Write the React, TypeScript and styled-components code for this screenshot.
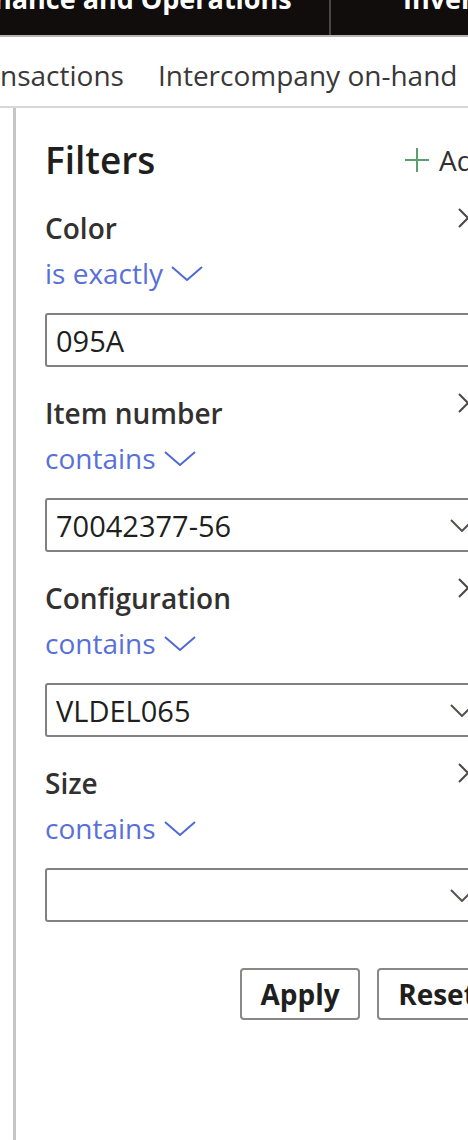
import React from "react";
import styled, { createGlobalStyle } from "styled-components";

const Global = createGlobalStyle`
  html, body {
    margin: 0;
    padding: 0;
    background: #ffffff;
  }
  body {
    width: 468px;
    height: 1140px;
    overflow: hidden;
    font-family: "Open Sans", "Noto Sans", sans-serif;
    color: #323130;
  }
`;

const Page = styled.div`
  width: 468px;
  height: 1140px;
  overflow: hidden;
  display: flex;
  flex-direction: column;
`;

const TopBar = styled.header`
  height: 35px;
  flex-shrink: 0;
  background: #110d0c;
  border-bottom: 2px solid #b4b4b4;
  display: flex;
  align-items: flex-end;
  overflow: hidden;
  white-space: nowrap;
`;

const Brand = styled.div`
  width: 335px;
  flex-shrink: 0;
  margin-left: -6px;
  margin-bottom: 23px;
  color: #ffffff;
  font-weight: 700;
  font-size: 27px;
  line-height: 27px;
`;

const BarDivider = styled.div`
  width: 2px;
  align-self: stretch;
  flex-shrink: 0;
  background: #4a4846;
`;

const ModuleName = styled.div`
  margin-left: 72px;
  margin-bottom: 23px;
  color: #ffffff;
  font-weight: 700;
  font-size: 27px;
  line-height: 27px;
`;

const SubNav = styled.nav`
  height: 69px;
  flex-shrink: 0;
  border-bottom: 2px solid #d6d6d6;
  display: flex;
  align-items: center;
  gap: 34px;
  white-space: nowrap;
  overflow: hidden;
`;

const NavTab = styled.span`
  font-size: 28px;
  line-height: 36px;
  color: #3a3838;
  padding-top: 6px;
`;

const Body = styled.div`
  flex: 1;
  display: flex;
  min-height: 0;
`;

const LeftRail = styled.div`
  width: 13px;
  flex-shrink: 0;
  border-right: 3px solid #c8c6c4;
`;

const Panel = styled.aside`
  flex-shrink: 0;
  width: 452px;
  padding-left: 29px;
  padding-top: 28px;
  display: flex;
  flex-direction: column;
`;

const Header = styled.div`
  display: flex;
  align-items: center;
  justify-content: space-between;
  height: 48px;
`;

const Title = styled.h2`
  margin: 0;
  font-size: 37px;
  line-height: 48px;
  font-weight: 600;
  color: #201f1e;
`;

const AddButton = styled.button`
  display: flex;
  align-items: center;
  gap: 10px;
  border: none;
  background: none;
  padding: 0;
  margin-right: 6px;
  font-family: inherit;
  font-size: 28px;
  line-height: 36px;
  color: #323130;
`;

const Sections = styled.div`
  margin-top: 26px;
  display: flex;
  flex-direction: column;
  gap: 28px;
`;

const Section = styled.section`
  display: flex;
  flex-direction: column;
`;

const LabelRow = styled.div`
  display: flex;
  justify-content: space-between;
  align-items: flex-start;
  height: 36px;
`;

const Label = styled.span`
  font-size: 28px;
  line-height: 36px;
  font-weight: 600;
  color: #323130;
`;

const CloseButton = styled.button`
  border: none;
  background: none;
  padding: 0;
  margin-top: -2px;
  margin-right: 19px;
  width: 20px;
  height: 20px;
  display: flex;
`;

const Operator = styled.button`
  margin-top: 9px;
  align-self: flex-start;
  display: flex;
  align-items: center;
  gap: 8px;
  border: none;
  background: none;
  padding: 0;
  font-family: inherit;
  font-size: 28px;
  line-height: 36px;
  color: #5870d8;
`;

const Field = styled.div`
  margin-top: 22px;
  height: 54px;
  box-sizing: border-box;
  border: 2px solid #838180;
  border-radius: 3px;
  display: flex;
  align-items: center;
  justify-content: space-between;
  padding: 0 21px 0 9px;
  font-size: 29px;
  color: #201f1e;
`;

const Buttons = styled.div`
  margin-top: 46px;
  display: flex;
  justify-content: flex-end;
  gap: 17px;
`;

const ActionButton = styled.button`
  width: 120px;
  height: 52px;
  box-sizing: border-box;
  border: 2px solid #8a8886;
  border-radius: 4px;
  background: #ffffff;
  font-family: inherit;
  font-size: 28px;
  font-weight: 700;
  color: #201f1e;
  padding: 0;
`;

const PlusIcon = () => (
  <svg width="24" height="26" viewBox="0 0 24 26" fill="none">
    <path d="M12 1V25M0 13H24" stroke="#5a9e72" strokeWidth="2" />
  </svg>
);

const CloseIcon = () => (
  <svg width="20" height="20" viewBox="0 0 20 20" fill="none">
    <path d="M1 1L19 19M19 1L1 19" stroke="#4a4846" strokeWidth="2" />
  </svg>
);

const Chevron = ({ color, w, h }: { color: string; w: number; h: number }) => (
  <svg width={w} height={h} viewBox={`0 0 ${w} ${h}`} fill="none">
    <path d={`M1 1L${w / 2} ${h - 1}L${w - 1} 1`} stroke={color} strokeWidth="2" />
  </svg>
);

type Filter = { label: string; op: string; value: string; dropdown: boolean };

const filters: Filter[] = [
  { label: "Color", op: "is exactly", value: "095A", dropdown: false },
  { label: "Item number", op: "contains", value: "70042377-56", dropdown: true },
  { label: "Configuration", op: "contains", value: "VLDEL065", dropdown: true },
  { label: "Size", op: "contains", value: "", dropdown: true },
];

export default function App() {
  return (
    <Page>
      <Global />
      <TopBar>
        <Brand>nance and Operations</Brand>
        <BarDivider />
        <ModuleName>Inventory management</ModuleName>
      </TopBar>
      <SubNav>
        <NavTab>nsactions</NavTab>
        <NavTab>Intercompany on-hand</NavTab>
      </SubNav>
      <Body>
        <LeftRail />
        <Panel>
          <Header>
            <Title>Filters</Title>
            <AddButton>
              <PlusIcon />
              Add
            </AddButton>
          </Header>
          <Sections>
            {filters.map((f) => (
              <Section key={f.label}>
                <LabelRow>
                  <Label>{f.label}</Label>
                  <CloseButton aria-label="Remove">
                    <CloseIcon />
                  </CloseButton>
                </LabelRow>
                <Operator>
                  {f.op}
                  <Chevron color="#4f6ad6" w={32} h={15} />
                </Operator>
                <Field>
                  <span>{f.value}</span>
                  {f.dropdown && <Chevron color="#55524f" w={24} h={13} />}
                </Field>
              </Section>
            ))}
          </Sections>
          <Buttons>
            <ActionButton>Apply</ActionButton>
            <ActionButton>Reset</ActionButton>
          </Buttons>
        </Panel>
      </Body>
    </Page>
  );
}
